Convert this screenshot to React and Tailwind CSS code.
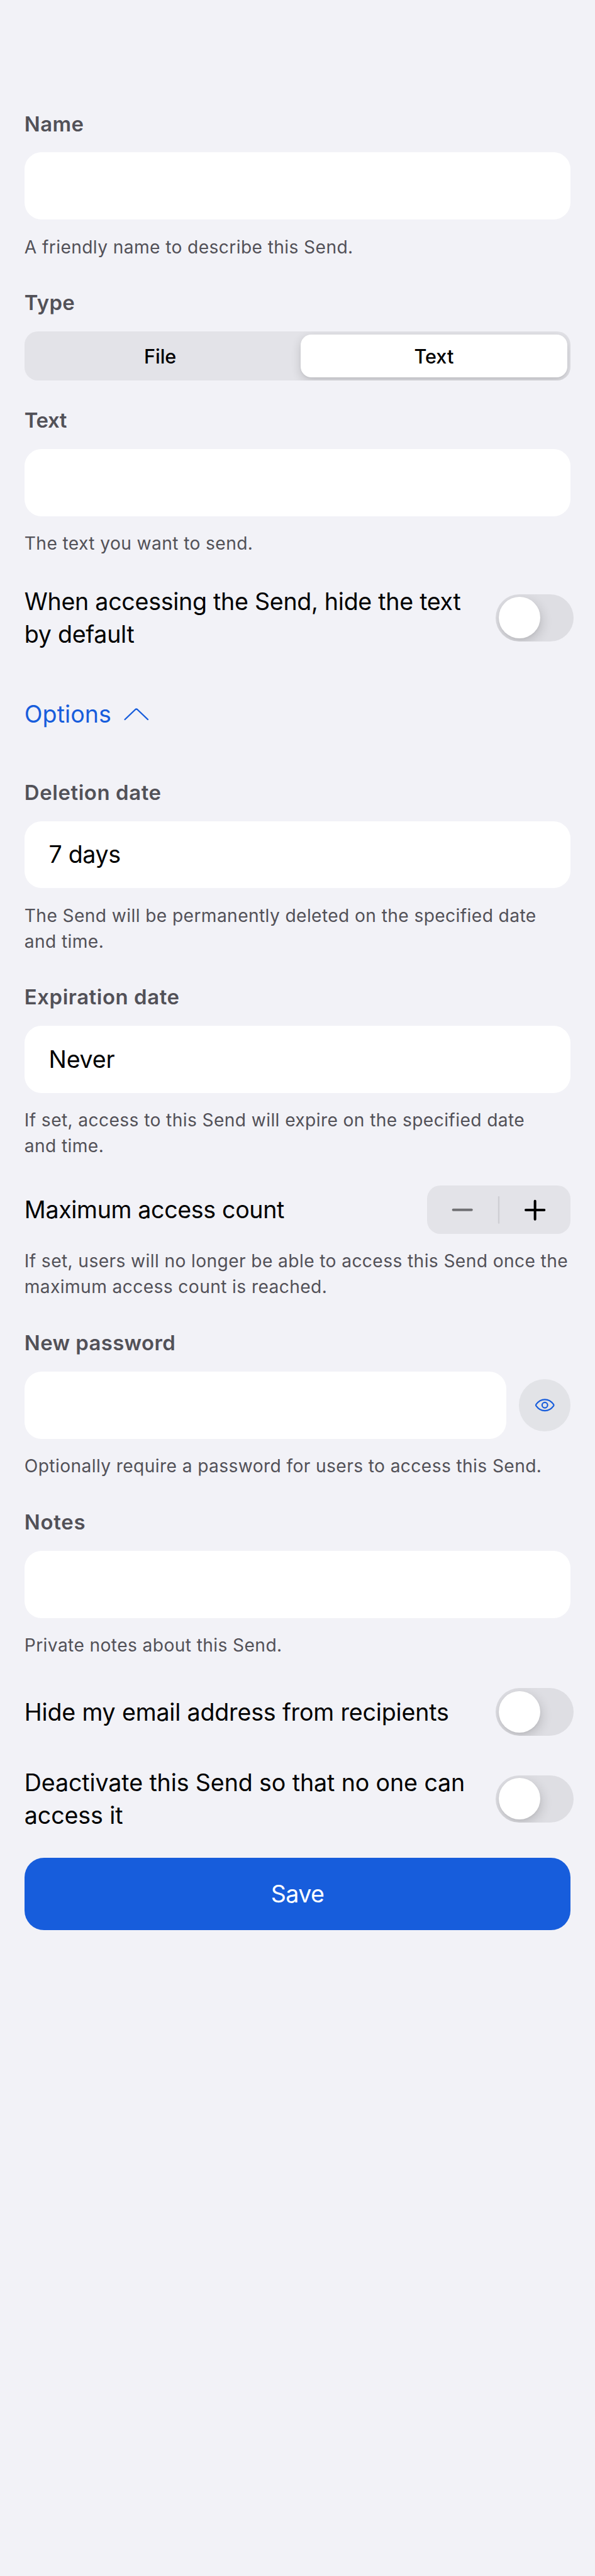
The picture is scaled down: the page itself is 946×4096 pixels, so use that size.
import React from 'react';

function Heading({ children, className = '' }) {
  return (
    <h2 className={`text-[32.9px] leading-[48px] font-semibold whitespace-nowrap text-[#525158] ${className}`}>
      {children}
    </h2>
  );
}

function Helper({ lines, className = '' }) {
  return (
    <p className={`-mb-[0.7px] pt-[0.7px] text-[28.2px] leading-[41.2px] tracking-[0.38px] whitespace-nowrap text-[#525158] ${className}`}>
      {lines.map((line) => (
        <span key={line} className="block">{line}</span>
      ))}
    </p>
  );
}

function Input({ value, className = '' }) {
  return (
    <div className={`mt-[21.8px] flex h-[106.8px] items-center rounded-[27px] bg-white px-[38.8px] pt-[1px] text-[37.6px] leading-[52.6px] ${className}`}>
      {value}
    </div>
  );
}

function Toggle() {
  return (
    <div className="-mr-[4.8px] flex h-[75.2px] w-[123.6px] shrink-0 items-center overflow-hidden rounded-full bg-[#dedee3] pl-[4.8px]">
      <div className="size-[65.6px] rounded-full bg-white shadow-[2px_6px_18px_rgba(0,0,0,0.16),0_2px_4px_rgba(0,0,0,0.04)]" />
    </div>
  );
}

function ToggleRow({ lines, className = '' }) {
  return (
    <div className={`flex items-center justify-between ${className}`}>
      <p className="-mb-[1px] pt-[1px] text-[37.6px] leading-[52.6px] whitespace-nowrap">
        {lines.map((line) => (
          <span key={line} className="block">{line}</span>
        ))}
      </p>
      <Toggle />
    </div>
  );
}

export default function App() {
  return (
    <main className="flex min-h-[4096px] w-[946px] flex-col bg-[#f2f2f7] px-[38.8px] pt-[172.7px] font-['Inter',sans-serif] text-black">
      <section>
        <Heading className="tracking-[0.4px]">Name</Heading>
        <Input />
        <Helper className="mt-[22.6px]" lines={['A friendly name to describe this Send.']} />
      </section>

      <section className="mt-[43.5px]">
        <Heading className="tracking-[0.3px]">Type</Heading>
        <div className="mt-[22.8px] flex h-[77.7px] overflow-hidden rounded-[21px] bg-[#e3e3e8] p-[4.9px] text-[30.6px] font-medium">
          <div className="flex flex-1 items-center justify-center pt-[1px] pr-[12px]">File</div>
          <div className="flex w-[424.8px] items-center justify-center rounded-[17px] bg-white pt-[1px] shadow-[0_5px_16px_rgba(0,0,0,0.16),0_2px_3px_rgba(0,0,0,0.04)]">
            Text
          </div>
        </div>
      </section>

      <section className="mt-[39.3px]">
        <Heading className="tracking-[-0.4px]">Text</Heading>
        <Input />
        <Helper className="mt-[22.6px]" lines={['The text you want to send.']} />
      </section>

      <ToggleRow
        className="mt-[44.8px] tracking-[-0.28px]"
        lines={['When accessing the Send, hide the text', 'by default']}
      />

      <button className="mt-[75.2px] -mb-[0.6px] flex items-center text-[37.6px] leading-[52.6px] tracking-[0.05px] text-[#175ddc]">
        Options
        <svg className="ml-[19px] h-[22px] w-[42px]" viewBox="0 0 42 22" fill="none" stroke="currentColor" strokeWidth="2.4" strokeLinecap="round" strokeLinejoin="round">
          <path d="M2.6 19 L19.4 3 Q20.8 1.8 22.2 3 L39 19" />
        </svg>
      </button>

      <section className="mt-[73.8px]">
        <Heading className="tracking-[0.6px]">Deletion date</Heading>
        <Input value="7 days" className="tracking-[-0.39px]" />
        <Helper
          className="mt-[22.6px]"
          lines={['The Send will be permanently deleted on the specified date', 'and time.']}
        />
      </section>

      <section className="mt-[43.8px]">
        <Heading className="tracking-[0.57px]">Expiration date</Heading>
        <Input value="Never" className="tracking-[-0.23px]" />
        <Helper
          className="mt-[22.6px]"
          lines={['If set, access to this Send will expire on the specified date', 'and time.']}
        />
      </section>

      <section className="mt-[41.8px]">
        <div className="flex items-center justify-between">
          <span className="pt-[1px] text-[37.6px] leading-[52.6px] tracking-[-0.35px]">Maximum access count</span>
          <div className="h-[77.7px] w-[228px] rounded-[21px] bg-[#e3e3e8]">
            <svg className="size-full" viewBox="0 0 282 96" fill="none" strokeLinecap="round">
              <path d="M51.5 47.8 H87.5" stroke="#717174" strokeWidth="5" />
              <path d="M141 22.5 V73.5" stroke="#cfcfd4" strokeWidth="3" />
              <path d="M194.2 48.3 H230.4 M212.3 30.5 V66.5" stroke="#000" strokeWidth="5" />
            </svg>
          </div>
        </div>
        <Helper
          className="mt-[22.3px]"
          lines={['If set, users will no longer be able to access this Send once the', 'maximum access count is reached.']}
        />
      </section>

      <section className="mt-[44.3px]">
        <Heading className="tracking-[0.39px]">New password</Heading>
        <div className="flex">
          <Input className="w-[766.2px]" />
          <div className="mt-[33.9px] ml-auto size-[82.5px] rounded-full bg-[#e2e3e7]">
            <svg className="size-full" viewBox="0 0 102 102" fill="none" stroke="#175ddc" strokeWidth="2.7" strokeLinejoin="round">
              <path d="M33.8 49.6 C37.5 44.5 43.5 40 51 40 S64.5 44.5 68.2 49.6 Q69.1 51 68.2 52.4 C64.5 57.5 58.5 62 51 62 S37.5 57.5 33.8 52.4 Q32.9 51 33.8 49.6 Z" />
              <circle cx="51" cy="51" r="5.4" />
            </svg>
          </div>
        </div>
        <Helper className="mt-[22.6px]" lines={['Optionally require a password for users to access this Send.']} />
      </section>

      <section className="mt-[44.4px]">
        <Heading className="tracking-[0.76px]">Notes</Heading>
        <Input />
        <Helper className="mt-[22.6px]" lines={['Private notes about this Send.']} />
      </section>

      <ToggleRow className="mt-[48px] tracking-[-0.18px]" lines={['Hide my email address from recipients']} />
      <ToggleRow
        className="mt-[48.1px] tracking-[-0.11px]"
        lines={['Deactivate this Send so that no one can', 'access it']}
      />

      <button className="mt-[41.6px] h-[114.8px] rounded-[31px] bg-[#175ddc] text-[37.6px] leading-[52.6px] tracking-[-0.6px] text-white">
        Save
      </button>
    </main>
  );
}
